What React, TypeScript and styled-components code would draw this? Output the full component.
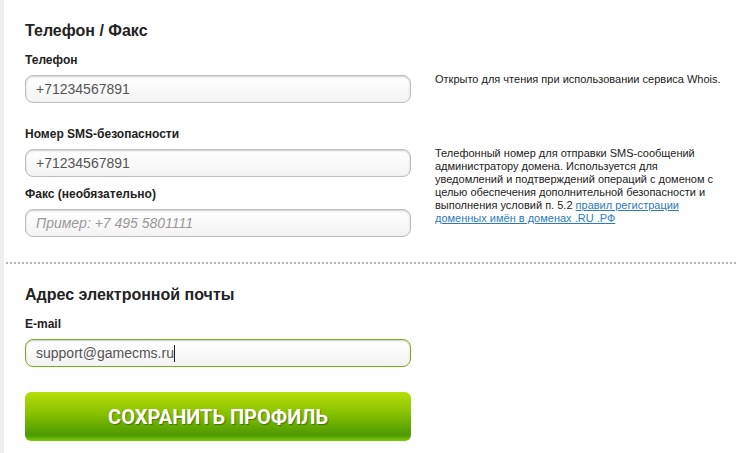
import styled, { createGlobalStyle } from "styled-components";

const Global = createGlobalStyle`
  html, body {
    margin: 0;
    padding: 0;
    background: #fff;
  }
  body {
    font-family: "Liberation Sans", Arial, sans-serif;
    color: #222;
  }
`;

function App() {
  return (
    <Page>
      <Global />
      <Section>
        <Title>Телефон / Факс</Title>
        <FieldGrid>
          <Field>
            <Label>Телефон</Label>
            <Input readOnly defaultValue="+71234567891" />
          </Field>
          <Note>Открыто для чтения при использовании сервиса Whois.</Note>

          <Field gapTop={23}>
            <Label>Номер SMS-безопасности</Label>
            <Input readOnly defaultValue="+71234567891" />
          </Field>
          <Note tall>
            Телефонный номер для отправки SMS-сообщений
            <br />
            администратору домена. Используется для
            <br />
            уведомлений и подтверждений операций с доменом с
            <br />
            целью обеспечения дополнительной безопасности и
            <br />
            выполнения условий п. 5.2 <a href="#">правил регистрации</a>
            <br />
            <a href="#">доменных имён в доменах .RU .РФ</a>
          </Note>
          <Field gapTop={9}>
            <Label>Факс (необязательно)</Label>
            <Input readOnly placeholder="Пример: +7 495 5801111" />
          </Field>
        </FieldGrid>
      </Section>

      <Divider />

      <Section>
        <Title>Адрес электронной почты</Title>
        <FieldGrid>
          <Field>
            <Label>E-mail</Label>
            <InputWrap>
              <Input readOnly active defaultValue="support@gamecms.ru" />
              <Caret />
            </InputWrap>
          </Field>
        </FieldGrid>
        <SaveButton>Сохранить профиль</SaveButton>
      </Section>
    </Page>
  );
}

const Page = styled.div`
  width: 733px;
  height: 453px;
  border-left: 4px solid #efefef;
  overflow: hidden;
`;

const Section = styled.div`
  padding: 21px 0 0 21px;
`;

const Title = styled.h2`
  margin: 0 0 11px;
  font-size: 16px;
  line-height: 20px;
  font-weight: 700;
  color: #222;
`;

const FieldGrid = styled.div`
  display: grid;
  grid-template-columns: 386px 290px;
  column-gap: 24px;
`;

const Field = styled.div<{ gapTop?: number }>`
  grid-column: 1;
  display: flex;
  flex-direction: column;
  margin-top: ${(p) => p.gapTop || 0}px;
`;

const Label = styled.label`
  font-size: 12px;
  line-height: 16px;
  font-weight: 700;
  color: #222;
  margin-bottom: 7px;
`;

const InputWrap = styled.div`
  position: relative;
`;

const Input = styled.input<{ active?: boolean }>`
  box-sizing: border-box;
  width: 386px;
  height: 28px;
  padding: 0 10px;
  border: 1px solid ${(p) => (p.active ? "#77b01a" : "#bdbdbd")};
  border-radius: 8px;
  background: linear-gradient(#ffffff, #f3f3f3);
  box-shadow: inset 0 1px 2px rgba(0, 0, 0, 0.2);
  font-family: "Liberation Sans", Arial, sans-serif;
  font-size: 14px;
  color: #555;
  outline: none;
  &::placeholder {
    color: #999;
    font-style: italic;
  }
`;

const Caret = styled.span`
  position: absolute;
  left: 149px;
  top: 6px;
  width: 1px;
  height: 17px;
  background: #222;
`;

const Note = styled.div<{ tall?: boolean }>`
  grid-column: 2;
  grid-row: ${(p) => (p.tall ? "2 / 4" : "1")};
  padding-top: ${(p) => (p.tall ? 44 : 21)}px;
  font-size: 11px;
  line-height: 13px;
  color: #222;
  white-space: nowrap;
  & a {
    color: #2b7bc0;
    text-decoration: underline;
  }
`;

const Divider = styled.div`
  margin: 25px 1px 0 2px;
  height: 2px;
  background: repeating-linear-gradient(
    to right,
    #b4b4b4 0 2px,
    transparent 2px 4px
  );
`;

const SaveButton = styled.button`
  display: block;
  box-sizing: border-box;
  width: 386px;
  height: 49px;
  margin-top: 25px;
  border: none;
  border-radius: 6px;
  background: linear-gradient(
    #b7de08 0%,
    #8cc400 40%,
    #4d9a00 88%,
    #7acc00 100%
  );
  color: #fff;
  font-family: Roboto, "Liberation Sans", sans-serif;
  font-weight: 700;
  font-size: 20px;
  text-transform: uppercase;
  text-shadow: 1px 1px 1px rgba(0, 0, 0, 0.35);
  cursor: pointer;
`;

export default App;
